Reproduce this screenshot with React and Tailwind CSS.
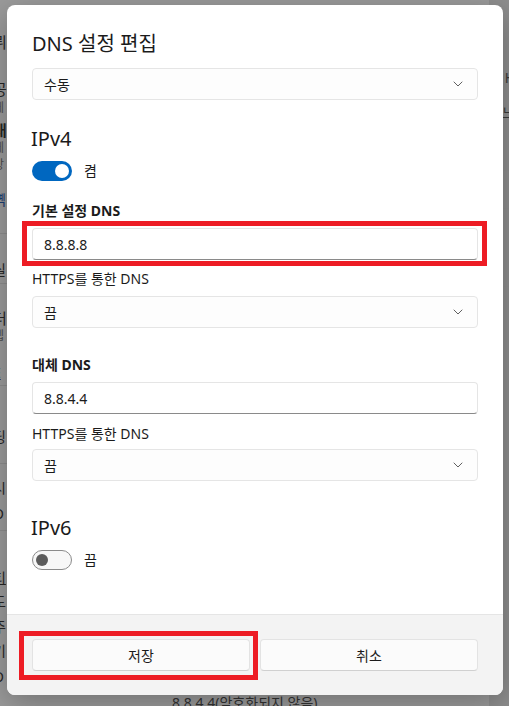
import React from "react";

const font = "font-['Noto_Sans','Noto_Sans_CJK_KR',sans-serif]";

// fragments of the dimmed settings page that peek out at the left edge
const leftRows = [
  { t: "뤼", cls: "mt-[32px] h-[20px] text-[15px] text-[#262626]" },
  { t: "공", cls: "mt-[27px] h-[20px] text-[15px] text-[#262626]" },
  { t: "께", cls: "mt-[1px] h-[16px] text-[12px] text-[#4d4d4d]" },
  { t: "대", cls: "mt-[4px] h-[20px] text-[15px] font-bold text-[#262626]" },
  { t: "께", cls: "mt-0 h-[16px] text-[12px] text-[#4d4d4d]" },
  { t: "상", cls: "mt-[1px] h-[16px] text-[12px] text-[#4d4d4d]" },
  { t: "뼥", cls: "mt-[17px] h-[20px] text-[14px] text-[#1d3e72]" },
  { line: true, cls: "mt-[23px]" },
  { t: "실", cls: "mt-[26px] h-[20px] text-[14px] text-[#262626]" },
  { line: true, cls: "mt-[3px]" },
  { t: "더", cls: "mt-[24px] h-[20px] text-[15px] text-[#262626]" },
  { t: "렙", cls: "mt-0 h-[16px] text-[12px] text-[#4d4d4d]" },
  { t: "E", cls: "mt-[19px] h-[20px] text-[14px] text-[#1d3e72] underline" },
  { line: true, cls: "mt-[2px]" },
  { t: "딩", cls: "mt-[41px] h-[20px] text-[14px] text-[#262626]" },
  { line: true, cls: "mt-[16px]" },
  { t: "시", cls: "mt-[14px] h-[20px] text-[14px] text-[#262626]" },
  { t: "O", cls: "mt-[6px] h-[20px] text-[14px] text-[#262626]" },
  { line: true, cls: "mt-[6px]" },
  { t: "티", cls: "mt-[37px] h-[20px] text-[14px] text-[#262626] underline" },
  { t: "도", cls: "mt-[4px] h-[20px] text-[14px] text-[#262626]" },
  { t: "주", cls: "mt-[5px] h-[20px] text-[14px] text-[#262626]" },
  { t: "기", cls: "mt-[4px] h-[20px] text-[14px] text-[#262626]" },
  { t: "O", cls: "mt-[6px] h-[20px] text-[14px] text-[#262626]" },
];

const rightRows = [
  { t: "H", cls: "mt-[68px] h-[20px] text-[14px] text-[#3a3a3a]" },
  { t: "느", cls: "mt-[15px] h-[20px] text-[14px] text-[#3a3a3a]" },
  { line: true, cls: "mt-[47px]" },
  { line: true, cls: "mt-[37px]" },
  { t: ".", cls: "mt-[20px] h-[20px] text-[14px] text-[#3a3a3a]" },
  { line: true, cls: "mt-[37px]" },
];

function BgColumn({ rows, align }) {
  return (
    <div className={`flex flex-col ${align === "right" ? "items-end" : "items-start"}`}>
      {rows.map((r, i) =>
        r.line ? (
          <div key={i} className={`h-px w-full bg-[#8d8d8d] ${r.cls}`} />
        ) : (
          <div
            key={i}
            className={`flex items-center leading-none ${align === "right" ? "-mr-[6px]" : "-ml-[7px]"} ${r.cls}`}
          >
            {r.t}
          </div>
        )
      )}
    </div>
  );
}

function Chevron() {
  return (
    <svg width="10" height="10" viewBox="0 0 10 10" fill="none">
      <path d="M1 3L5 7L9 3" stroke="#606060" strokeWidth="1" strokeLinecap="round" strokeLinejoin="round" />
    </svg>
  );
}

function Select({ value, className = "" }) {
  return (
    <div
      className={`h-[32px] flex items-center justify-between pl-[11px] pr-[14px] rounded-[4px] border border-[#e5e5e5] bg-[#fdfdfd] text-[14px] text-[#1b1b1b] ${className}`}
    >
      <span>{value}</span>
      <Chevron />
    </div>
  );
}

function TextBox({ value, className = "" }) {
  return (
    <div
      className={`h-[32px] flex items-center pl-[11px] rounded-[4px] border border-[#e5e5e5] border-b-[#8a8a8a] bg-white text-[14px] text-[#1b1b1b] ${className}`}
    >
      {value}
    </div>
  );
}

function Toggle({ on, label, className = "" }) {
  return (
    <div className={`flex items-center gap-[12px] ${className}`}>
      {on ? (
        <div className="w-[40px] h-[20px] rounded-full bg-[#0067c0] flex items-center justify-end">
          <div className="w-[14px] h-[14px] rounded-full bg-white mr-[3px]" />
        </div>
      ) : (
        <div className="w-[40px] h-[20px] rounded-full border border-[#8b8b8b] bg-[#f7f7f7] flex items-center">
          <div className="w-[12px] h-[12px] rounded-full bg-[#5c5c5c] ml-[3px]" />
        </div>
      )}
      <span className="text-[14px] leading-[20px] text-[#1b1b1b]">{label}</span>
    </div>
  );
}

function Button({ children }) {
  return (
    <button className="flex-1 h-[32px] rounded-[4px] border border-[#e3e3e3] border-b-[#d0d0d0] bg-[#fbfbfb] text-[14px] text-[#1b1b1b]">
      {children}
    </button>
  );
}

export default function App() {
  return (
    <div className={`relative w-[509px] h-[706px] overflow-hidden bg-[#9b9b9b] ${font}`}>
      {/* dimmed page behind the dialog */}
      <div className="h-full flex justify-between">
        <div className="w-[20px]">
          <BgColumn rows={leftRows} align="left" />
        </div>
        <div className="flex-1 flex flex-col justify-end">
          <div className="pl-[152px] -mb-[7px] text-[14px] leading-[20px] text-[#333333]">8.8.4.4(암호화되지 않음)</div>
        </div>
        <div className="w-[20px] bg-[#8e8e8e]">
          <BgColumn rows={rightRows} align="right" />
        </div>
      </div>

      {/* dialog */}
      <div className="absolute left-[7px] top-[5px] w-[496px] h-[690px] rounded-[8px] bg-white overflow-hidden flex flex-col shadow-[0_8px_32px_rgba(0,0,0,0.28)]">
        <div className="flex-1 px-[25px] pt-[25px] flex flex-col">
          <h1 className="text-[20px] leading-[28px] text-[#1b1b1b]">DNS 설정 편집</h1>
          <Select value="수동" className="mt-[10px]" />

          <h2 className="mt-[25px] -ml-[1px] text-[20px] leading-[28px] text-[#1b1b1b]">IPv4</h2>
          <Toggle on label="켬" className="mt-[8px]" />

          <div className="mt-[20px] text-[14px] leading-[20px] font-bold text-[#1b1b1b]">기본 설정 DNS</div>
          <TextBox value="8.8.8.8" className="mt-[7px]" />
          <div className="mt-[9px] text-[14px] leading-[20px] text-[#1b1b1b]">HTTPS를 통한 DNS</div>
          <Select value="끔" className="mt-[7px]" />

          <div className="mt-[27px] text-[14px] leading-[20px] font-bold text-[#1b1b1b]">대체 DNS</div>
          <TextBox value="8.8.4.4" className="mt-[7px]" />
          <div className="mt-[10px] text-[14px] leading-[20px] text-[#1b1b1b]">HTTPS를 통한 DNS</div>
          <Select value="끔" className="mt-[5px]" />

          <h2 className="mt-[33px] -ml-[1px] text-[20px] leading-[28px] text-[#1b1b1b]">IPv6</h2>
          <Toggle label="끔" className="mt-[8px]" />
        </div>

        {/* footer */}
        <div className="h-[81px] shrink-0 border-t border-[#e5e5e5] bg-[#f3f3f3] px-[25px] pt-[24px] flex gap-[10px]">
          <Button>저장</Button>
          <Button>취소</Button>
        </div>
      </div>

      {/* red highlight marks */}
      <div className="absolute left-[22px] top-[221px] w-[465px] h-[45px] border-[5px] border-[#ed1c24]" />
      <div className="absolute left-[19px] top-[631px] w-[239px] h-[49px] border-[5px] border-[#ed1c24]" />
    </div>
  );
}
